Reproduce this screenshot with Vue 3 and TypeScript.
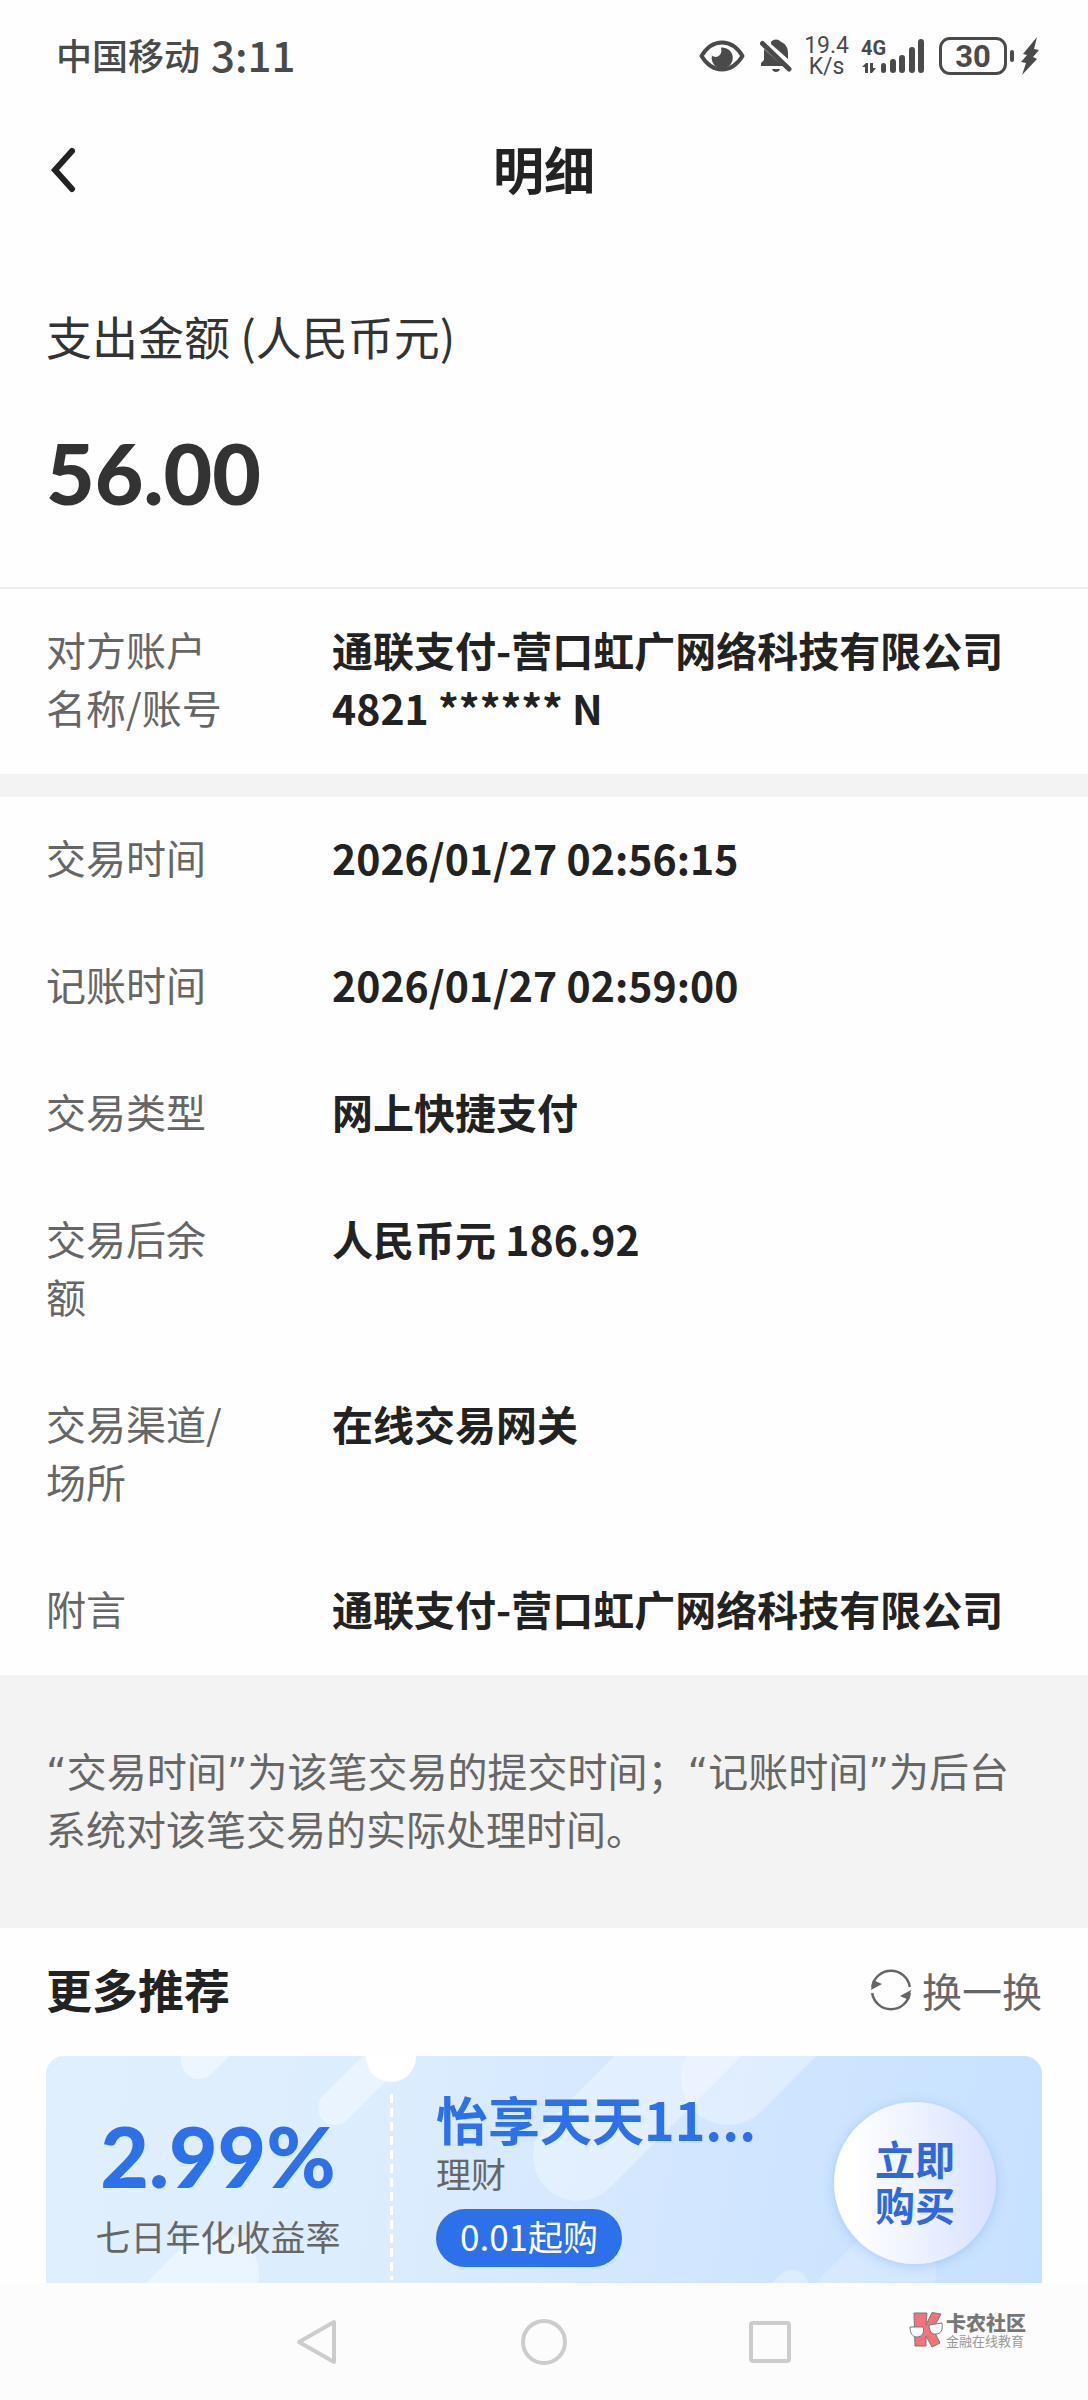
<script setup lang="ts">
interface Row {
  label: string
  value: string[]
}

const party: Row = {
  label: '对方账户名称/账号',
  value: ['通联支付-营口虹广网络科技有限公司', '4821 ****** N'],
}

const details: Row[] = [
  { label: '交易时间', value: ['2026/01/27 02:56:15'] },
  { label: '记账时间', value: ['2026/01/27 02:59:00'] },
  { label: '交易类型', value: ['网上快捷支付'] },
  { label: '交易后余额', value: ['人民币元 186.92'] },
  { label: '交易渠道/场所', value: ['在线交易网关'] },
  { label: '附言', value: ['通联支付-营口虹广网络科技有限公司'] },
]
</script>

<template>
  <div class="page">
    <div class="status">
      <span class="carrier">中国移动</span>
      <span class="clock">3:11</span>
      <div class="status-icons">
        <svg class="eye" width="46" height="32" viewBox="0 0 46 32" aria-hidden="true">
          <path d="M2.500 16C8 7 15 2.500 23 2.500S38 7 43.500 16C38 25 31 29.500 23 29.500S8 25 2.500 16Z" fill="none" stroke="#4a4a4a" stroke-width="4" stroke-linejoin="round" />
          <path d="M22 7.500A10.500 10.500 0 1 1 13 15.500C17 19 24 16 22 7.500Z" fill="#4a4a4a" />
        </svg>
        <svg class="bell" width="32" height="36" viewBox="0 0 32 36" aria-hidden="true">
          <path d="M11 4C13 0.500 19 0.500 21 4C26 6 28 10 28 15V21L11 6ZM4 11L23 28H1V25L4 22ZM12 31H20C19 35 13 35 12 31Z" fill="#4a4a4a" />
          <path d="M2.500 5.500L29 31" stroke="#4a4a4a" stroke-width="5" stroke-linecap="round" />
        </svg>
        <div class="speed"><span>19.4</span><span>K/s</span></div>
        <div class="signal">
          <div class="net">
            <span>4G</span>
            <svg width="16" height="12" viewBox="0 0 16 12" aria-hidden="true">
              <path d="M1 5L5 1H7V11H4V5ZM9 1H12V6H15L11 11H9Z" fill="#4a4a4a" />
            </svg>
          </div>
          <svg class="bars" width="44" height="36" viewBox="0 0 44 36" aria-hidden="true">
            <g fill="#4a4a4a">
              <rect x="0" y="25" width="5" height="10" rx="2.500" />
              <rect x="9" y="21" width="6" height="14" rx="3" />
              <rect x="18" y="17" width="6" height="18" rx="3" />
              <rect x="28" y="9" width="6" height="26" rx="3" />
              <rect x="37" y="1" width="6" height="34" rx="3" />
            </g>
          </svg>
        </div>
        <div class="battery"><span>30</span></div>
        <i class="nub"></i>
        <svg width="18" height="38" viewBox="0 0 18 38" aria-hidden="true">
          <path d="M16 0L2 17L6 18L0 25L5 26L1 38L16 22L12 20L18 13L13 12Z" fill="#4a4a4a" />
        </svg>
      </div>
    </div>

    <header class="header">
      <button class="back" type="button" aria-label="返回">
        <svg width="26" height="46" viewBox="0 0 26 46" aria-hidden="true">
          <path d="M22 4L5 23L22 42" fill="none" stroke="#222" stroke-width="6" stroke-linecap="round" />
        </svg>
      </button>
      <h1>明细</h1>
    </header>

    <main class="content">
      <section class="summary">
        <p class="summary-label">支出金额 (人民币元)</p>
        <p class="summary-amount">56.00</p>
      </section>

      <dl class="rows party">
        <div class="row">
          <dt>{{ party.label }}</dt>
          <dd><span v-for="line in party.value" :key="line">{{ line }}</span></dd>
        </div>
      </dl>

      <dl class="rows">
        <div v-for="row in details" :key="row.label" class="row">
          <dt>{{ row.label }}</dt>
          <dd><span v-for="line in row.value" :key="line">{{ line }}</span></dd>
        </div>
      </dl>

      <p class="notice">“交易时间”为该笔交易的提交时间；“记账时间”为后台系统对该笔交易的实际处理时间。</p>

      <section class="more">
        <div class="more-head">
          <h2>更多推荐</h2>
          <button class="refresh" type="button">
            <svg width="42" height="42" viewBox="0 0 42 42" aria-hidden="true">
              <g fill="none" stroke="#666" stroke-width="2.500">
                <path d="M2.200 18A19 19 0 0 1 39.800 18" />
                <path d="M2.200 24A19 19 0 0 0 39.800 24" />
              </g>
              <path d="M1 21L3 11L12 15ZM41 21L39 31L30 27Z" fill="#666" />
            </svg>
            换一换
          </button>
        </div>

        <article class="card">
          <svg class="deco" viewBox="0 0 997 260" preserveAspectRatio="xMinYMin slice" aria-hidden="true">
            <g stroke="#fff" stroke-linecap="round" fill="none">
              <path d="M153 5L200 -42" stroke-width="36" stroke-opacity="0.45" />
              <path d="M289 52L370 -29" stroke-width="34" stroke-opacity="0.4" />
              <path d="M170 218L90 298" stroke-width="86" stroke-opacity="0.4" />
              <path d="M532 100L680 -48" stroke-width="90" stroke-opacity="0.32" />
              <path d="M682 22L760 -56" stroke-width="94" stroke-opacity="0.32" />
              <path d="M746 231L700 277" stroke-width="34" stroke-opacity="0.3" />
              <path d="M845 215L760 300" stroke-width="90" stroke-opacity="0.18" />
            </g>
            <circle cx="345" cy="1" r="25" fill="#fff" />
          </svg>
          <div class="rate">
            <strong>2.99%</strong>
            <span>七日年化收益率</span>
          </div>
          <i class="divider"></i>
          <div class="product">
            <h3>怡享天天11...</h3>
            <span class="kind">理财</span>
            <span class="pill">0.01起购</span>
          </div>
          <button class="buy" type="button">立即<br />购买</button>
        </article>
      </section>
    </main>

    <nav class="sysnav">
      <button type="button" aria-label="后退">
        <svg width="48" height="48" viewBox="0 0 48 48" aria-hidden="true">
          <path d="M40 4V44L5 24Z" />
        </svg>
      </button>
      <button type="button" aria-label="主屏幕">
        <svg width="48" height="48" viewBox="0 0 48 48" aria-hidden="true">
          <circle cx="24" cy="24" r="21" />
        </svg>
      </button>
      <button type="button" aria-label="最近任务">
        <svg width="48" height="48" viewBox="0 0 48 48" aria-hidden="true">
          <rect x="5" y="5" width="38" height="38" rx="2" />
        </svg>
      </button>
      <div class="mark">
        <svg width="34" height="36" viewBox="0 0 34 36" aria-hidden="true">
          <g stroke="#777" stroke-width="1">
            <path d="M5 1H18L17 13L23 0.500L32 2L24 17L31 31L23 35L17 24V34H6Z" fill="#f2737c" />
            <path d="M1 15L14 15C16 20 13 25 8 25C4 25 1 22 1 15Z" fill="#fff" />
            <path d="M20 13L33 11C34 18 32 22 27 22C23 23 20 19 20 13Z" fill="#fff" />
          </g>
        </svg>
        <div class="mark-text"><b>卡农社区</b><small>金融在线教育</small></div>
      </div>
    </nav>
  </div>
</template>

<style>
body {
  margin: 0;
}
</style>

<style scoped>
.page {
  display: flex;
  flex-direction: column;
  height: 100vh;
  background: #fefefe;
  color: #222;
  font-family: "Noto Sans CJK SC", sans-serif;
}

h1, h2, h3, p, dl, dd {
  margin: 0;
}

button {
  padding: 0;
  border: 0;
  background: none;
  color: inherit;
  font: inherit;
}

svg {
  display: block;
}

.status {
  display: flex;
  align-items: center;
  height: 112px;
  padding: 0 49px 0 56px;
  color: #4a4a4a;
}

.carrier,
.clock {
  padding-bottom: 5px;
  font-weight: 500;
}

.carrier {
  font-size: 36px;
}

.clock {
  margin-left: 11px;
  font-size: 42px;
}

.status-icons {
  display: flex;
  align-items: center;
  margin-left: auto;
  font-family: Roboto, sans-serif;
}

.bell {
  margin-left: 15px;
}

.speed {
  display: flex;
  flex-direction: column;
  align-items: center;
  margin-left: 12px;
  font-size: 23px;
  line-height: 21px;
}

.signal {
  display: flex;
  margin-left: 12px;
}

.net {
  display: flex;
  flex-direction: column;
  gap: 4px;
  width: 20px;
  font-size: 20px;
  font-weight: 700;
  line-height: 20px;
}

.battery {
  display: flex;
  align-items: center;
  justify-content: center;
  box-sizing: border-box;
  width: 68px;
  height: 38px;
  margin-left: 14px;
  border: 3px solid #4a4a4a;
  border-radius: 11px;
  font-size: 31px;
  font-weight: 700;
}

.nub {
  width: 4px;
  height: 12px;
  margin: 0 7px 0 3px;
  border-radius: 2px;
  background: #4a4a4a;
}

.header {
  display: grid;
  grid-template-columns: 1fr auto 1fr;
  align-items: center;
  height: 116px;
  padding: 0 50px;
}

.header h1 {
  padding-bottom: 5px;
  font-size: 51px;
  font-weight: 700;
  line-height: 76px;
}

.back {
  justify-self: start;
}

.content {
  flex: 1;
  min-height: 0;
  overflow-y: auto;
  scrollbar-width: none;
}

.summary {
  padding: 78px 46px 72px;
  border-bottom: 2px solid #eee;
  color: #333;
}

.summary-label {
  font-size: 46px;
  line-height: 58px;
}

.summary-amount {
  margin-top: 67px;
  font-family: Lato, sans-serif;
  font-size: 84px;
  font-weight: 900;
  line-height: 84px;
}

.rows {
  display: flex;
  flex-direction: column;
  gap: 69px;
  padding: 31px 46px 38px;
  font-size: 41px;
  line-height: 58px;
}

.party {
  border-bottom: 23px solid #f3f3f3;
}

.row {
  display: flex;
  gap: 96px;
}

dt {
  flex: none;
  width: 190px;
  color: #666;
  font-size: 40px;
}

dd {
  display: flex;
  flex-direction: column;
  font-weight: 700;
}

.notice {
  padding: 69px 46px 68px;
  background: #f3f3f3;
  color: #666;
  font-family: "DejaVu Sans", "Noto Sans CJK SC", sans-serif;
  font-size: 40px;
  line-height: 58px;
}

.more {
  padding: 31px 46px 0;
}

.more-head {
  display: flex;
  align-items: flex-start;
  justify-content: space-between;
}

.more-head h2 {
  font-size: 46px;
  font-weight: 700;
  line-height: 58px;
}

.refresh {
  display: flex;
  align-items: center;
  gap: 10px;
  color: #666;
  font-size: 40px;
  line-height: 62px;
}

.card {
  position: relative;
  display: flex;
  align-items: flex-start;
  height: 260px;
  margin-top: 35px;
  border-radius: 18px;
  background: linear-gradient(100deg, #e0effd 0%, #dcedfd 32%, #d2e6ff 64%, #c6e1ff 100%);
  overflow: hidden;
}

.deco {
  position: absolute;
  inset: 0;
  width: 100%;
  height: 100%;
}

.rate,
.divider,
.product,
.buy {
  position: relative;
}

.rate {
  display: flex;
  flex-direction: column;
  align-items: center;
  gap: 15px;
  width: 344px;
  padding-top: 58px;
  color: #666;
  font-size: 35px;
  line-height: 46px;
}

.rate strong {
  color: #2c70ea;
  font-family: Lato, sans-serif;
  font-size: 84px;
  font-weight: 900;
  line-height: 84px;
}

.divider {
  width: 3px;
  height: 186px;
  margin-top: 38px;
  background: repeating-linear-gradient(#fff 0 9px, transparent 9px 14px);
}

.product {
  display: flex;
  flex: 1;
  flex-direction: column;
  align-items: flex-start;
  padding: 32px 0 0 43px;
}

.product h3 {
  color: #2c70ea;
  font-size: 52px;
  font-weight: 700;
  line-height: 62px;
}

.kind {
  color: #666;
  font-size: 35px;
  line-height: 46px;
}

.pill {
  margin-top: 13px;
  padding: 0 24px 4px;
  border-radius: 29px;
  background: #2c70ea;
  color: #fff;
  font-size: 35px;
  line-height: 54px;
}

.buy {
  width: 162px;
  height: 162px;
  margin: 46px 46px 0 0;
  padding-bottom: 4px;
  border-radius: 50%;
  background: linear-gradient(90deg, #fff 10%, #ebf1ff 55%, #d8e0ff 100%);
  box-shadow: 0 2px 12px rgb(80 140 230 / 30%);
  color: #2f69d9;
  font-size: 40px;
  font-weight: 700;
  line-height: 46px;
}

.sysnav {
  position: relative;
  display: flex;
  align-items: center;
  justify-content: center;
  gap: 178px;
  height: 117px;
  background: #fcfcfc;
}

.sysnav button svg {
  fill: none;
  stroke: #ccc;
  stroke-width: 4;
  stroke-linejoin: round;
}

.mark {
  position: absolute;
  top: 29px;
  right: 62px;
  display: flex;
  align-items: center;
  gap: 3px;
}

.mark-text {
  display: flex;
  flex-direction: column;
  color: #777;
}

.mark-text b {
  font-size: 20px;
  font-weight: 900;
  line-height: 22px;
}

.mark-text small {
  color: #999;
  font-size: 13px;
  line-height: 14px;
}
</style>
